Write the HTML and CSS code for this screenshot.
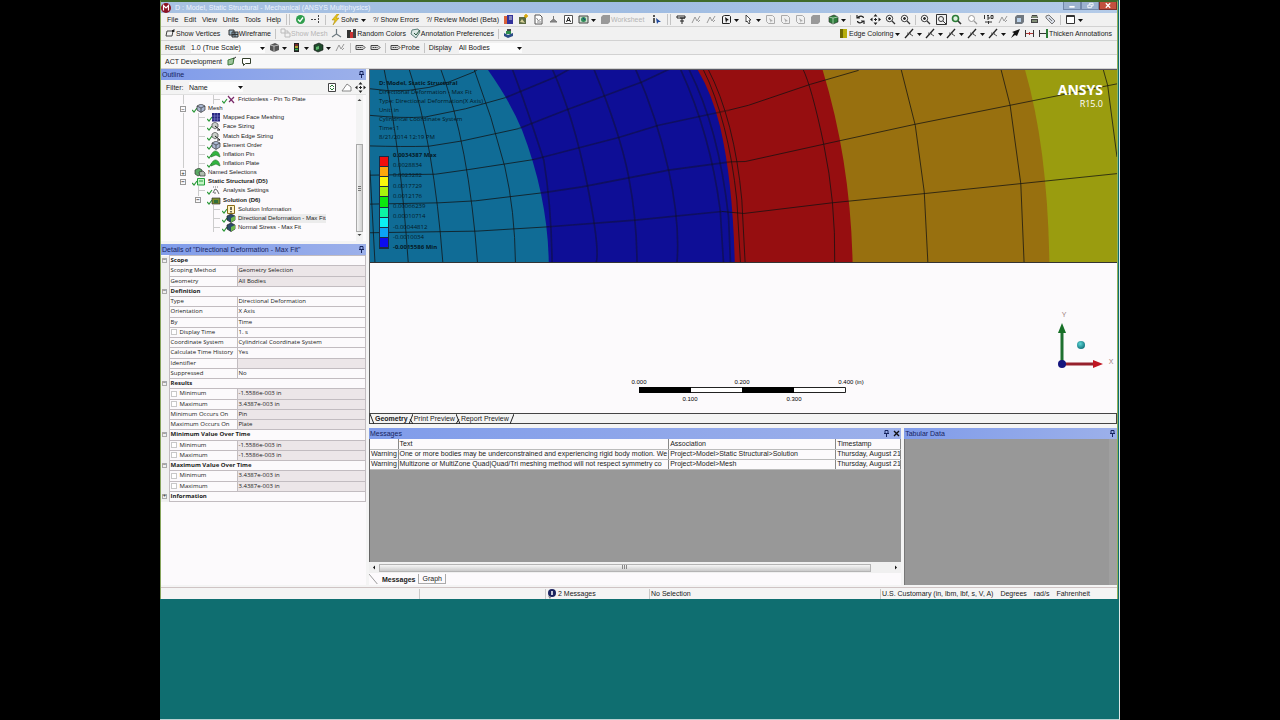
FILE: index.html
```
<!DOCTYPE html>
<html lang="en">
<head>
    <meta charset="UTF-8">
    <meta name="viewport" content="width=device-width, initial-scale=1.0">
    <title>D : Model, Static Structural - Mechanical</title>
    <link rel="stylesheet" href="styles.css">
</head>
<body>
    <!-- Icon shapes used by the toolbars and the tree -->
    <svg class="defs" aria-hidden="true">
        <symbol id="caret" viewBox="0 0 5 10"><path d="M0 4h5L2.500 7z" fill="#111"/></symbol>
        <symbol id="ok" viewBox="0 0 11 11"><circle cx="5.500" cy="5.500" r="4.500" fill="#2f9e4d"/><path d="M3 5.500l2 2 3-4" fill="none" stroke="#fff" stroke-width="1.300"/></symbol>
        <symbol id="dots" viewBox="0 0 11 11"><path d="M1 5.500h5M8.500 1v9" stroke="#444" stroke-dasharray="2 1"/></symbol>
        <symbol id="bolt" viewBox="0 0 11 11"><path d="M7 0L2 6h3l-2 5 6-7H6l3-4z" fill="#e6c318" stroke="#a98700" stroke-width=".5"/></symbol>
        <symbol id="chart" viewBox="0 0 11 11"><path d="M1 2h3v8H1z" fill="#d9623a"/><path d="M4 1h6v9H4z" fill="#32329b"/><path d="M6 3h3M6 5h3" stroke="#ddd"/></symbol>
        <symbol id="image" viewBox="0 0 11 11"><path d="M1 3h7v7H1z" fill="#5c6b42"/><path d="M2 8l2-3 3 4z" fill="#d8d29a"/><path d="M8 0v4M6 2h4" stroke="#d5a400" stroke-width="1.500"/></symbol>
        <symbol id="sheet" viewBox="0 0 11 11"><path d="M2 1h5l2 2v7H2z" fill="#fff" stroke="#555"/><path d="M3.500 4l2 3 2-2M4 8h4" fill="none" stroke="#888"/></symbol>
        <symbol id="refresh" viewBox="0 0 11 11"><path d="M1.500 1.500h7v8h-7z" fill="#fff" stroke="#444"/><path d="M3 5l2-2 2 2M3 6l2 2 2-2" fill="none" stroke="#2a7b35"/></symbol>
        <symbol id="pin3d" viewBox="0 0 11 11"><path d="M5.500 2v4M2 8l3.500-3L9 8z" fill="#888" stroke="#777"/></symbol>
        <symbol id="letter" viewBox="0 0 11 11"><path d="M1.500 1.500h8v8h-8z" fill="#fff" stroke="#555"/><path d="M3.500 8l2-5 2 5M4 6.500h3" fill="none" stroke="#222"/></symbol>
        <symbol id="globe" viewBox="0 0 11 11"><path d="M1 2h9v7H1z" fill="#cfe0d0" stroke="#444"/><circle cx="5.500" cy="5.500" r="2.500" fill="#2e8b57"/><path d="M5 4l2 2" stroke="#123a8a"/></symbol>
        <symbol id="cube" viewBox="0 0 11 11"><path d="M1 3l5-2 4 2v5l-5 2-4-2z" fill="#555"/><path d="M1 3l4 1 5-1M5 4v6" fill="none" stroke="#ddd" stroke-width=".7"/></symbol>
        <symbol id="gcube" viewBox="0 0 11 11"><path d="M1 3l5-2 4 2v5l-5 2-4-2z" fill="#2f7d3c" stroke="#222" stroke-width=".6"/><path d="M1 3l4 1 5-1M5 4v6" fill="none" stroke="#cfe8cf" stroke-width=".7"/></symbol>
        <symbol id="dcube" viewBox="0 0 11 11"><path d="M1 3l5-2 4 2v5l-5 2-4-2z" fill="#1f4a2c" stroke="#111" stroke-width=".6"/><path d="M3 5l3-1v3l-3 1z" fill="#5ab56a"/></symbol>
        <symbol id="bands" viewBox="0 0 11 11"><path d="M3 1h5v9H3z" fill="#222"/><path d="M4 3h3" stroke="#c33"/><path d="M4 5h3" stroke="#dc3" stroke-width="1.500"/><path d="M4 7.500h3" stroke="#3b5" stroke-width="1.500"/></symbol>
        <symbol id="info" viewBox="0 0 11 11"><path d="M3 1v2M3 4v5" stroke="#222" stroke-width="1.500"/><path d="M5 4l5 4H7.500L6 10z" fill="#214a9c"/></symbol>
        <symbol id="funnel" viewBox="0 0 11 11"><path d="M1 2h8v2H1zM4 4h5M6 4v6M4 7h4" fill="#fff" stroke="#222"/></symbol>
        <symbol id="wave" viewBox="0 0 11 11"><path d="M1 9l3-6 2 4 3-5M7 8l2-2" fill="none" stroke="#999"/></symbol>
        <symbol id="selbox" viewBox="0 0 11 11"><path d="M1.500 2.500l2-1h5l1 1v6l-1 1h-7z" fill="none" stroke="#222"/><path d="M4 3l4 3-2 .5L5 9z" fill="#111"/></symbol>
        <symbol id="selgrey" viewBox="0 0 11 11"><path d="M1.500 1.500h6l2 2v6h-6l-2-2z" fill="none" stroke="#aaa"/><path d="M4 4l4 3-2 .5V9z" fill="#aaa"/></symbol>
        <symbol id="arrow" viewBox="0 0 11 11"><path d="M3 1l5 5H6l1 3-1 1-2-3-1 1z" fill="#fff" stroke="#222" stroke-width=".8"/></symbol>
        <symbol id="solid" viewBox="0 0 11 11"><path d="M1 3l2-2h7v7l-2 2H1z" fill="#999"/></symbol>
        <symbol id="rotate" viewBox="0 0 11 11"><path d="M2 1v3h3M2.500 4c2-3 6-2 6 0M9 10V7H6M8.500 7c-2 3-6 2-6 0" fill="none" stroke="#222" stroke-width="1.200"/></symbol>
        <symbol id="move" viewBox="0 0 11 11"><path d="M5.500 0l2 2.500h-4zM5.500 11l2-2.500h-4zM0 5.500l2.500-2v4zM11 5.500l-2.500-2v4z" fill="#222"/><path d="M5.500 4v3M4 5.500h3" stroke="#222"/></symbol>
        <symbol id="zoom" viewBox="0 0 11 11"><circle cx="4.500" cy="4.500" r="3.200" fill="#fff" stroke="#333"/><path d="M3 4.500h3M4.500 3v3M7 7l3 3" stroke="#333" stroke-width="1.300"/></symbol>
        <symbol id="zoombox" viewBox="0 0 11 11"><path d="M.5.500h10v10H.5z" fill="none" stroke="#333"/><circle cx="5" cy="5" r="2.500" fill="none" stroke="#333"/><path d="M7 7l3 3" stroke="#333"/></symbol>
        <symbol id="zoomgreen" viewBox="0 0 11 11"><circle cx="4.500" cy="4.500" r="3" fill="#dff0df" stroke="#2a7b35" stroke-width="1.600"/><path d="M7 7l3 3" stroke="#333" stroke-width="1.600"/></symbol>
        <symbol id="zoomgrey" viewBox="0 0 11 11"><circle cx="4.500" cy="4.500" r="3" fill="#fff" stroke="#999"/><path d="M7 7l3 3" stroke="#999" stroke-width="1.300"/></symbol>
        <symbol id="iso" viewBox="0 0 11 11"><path d="M1.500 1v4M4 1.500h2M4 3h2v2H4M8 1.500h2v3H8zM2 8h7M5.500 7v3" fill="none" stroke="#333"/></symbol>
        <symbol id="bluebox" viewBox="0 0 11 11"><path d="M1 3l2-2h7v7l-2 2H1z" fill="#707880"/><path d="M3 4h4v4H3z" fill="#b9d0e8"/></symbol>
        <symbol id="stack" viewBox="0 0 11 11"><path d="M3 1h5l1 3H2zM2 5h7v4H2z" fill="#444"/><path d="M3 3h5M3 7h5" stroke="#bfd8a8"/></symbol>
        <symbol id="tag" viewBox="0 0 11 11"><path d="M1 2l3-1 6 6-3 3-6-6z" fill="#d8dde6" stroke="#777"/><path d="M4 4l3 3" stroke="#777"/></symbol>
        <symbol id="eraser" viewBox="0 0 11 11"><path d="M1 9l5-7 4 3v4z" fill="#fff" stroke="#888"/></symbol>
        <symbol id="pane" viewBox="0 0 11 11"><path d="M1.500 1.500h8v8h-8zM1 2.500h9" fill="#fff" stroke="#333"/></symbol>
        <symbol id="vertex" viewBox="0 0 11 11"><path d="M2 3h6l-1 5H1zM9 1v3" fill="none" stroke="#444"/><path d="M7 2h2v2H7z" fill="#222"/></symbol>
        <symbol id="wire" viewBox="0 0 11 11"><path d="M1 2h5v5H1zM4 4h6v5H4z" fill="#9db8c8" stroke="#333"/><path d="M7 4v5M4 6.500h6" stroke="#333"/></symbol>
        <symbol id="meshgrey" viewBox="0 0 11 11"><path d="M1 1h4v4H1zM5 5h5v4H5zM5 3h3v2" fill="none" stroke="#bbb"/></symbol>
        <symbol id="axes" viewBox="0 0 11 11"><path d="M5.500 1v5L1 9M5.500 6L10 9" fill="none" stroke="#6d7a80" stroke-width="1.200"/></symbol>
        <symbol id="colors" viewBox="0 0 11 11"><path d="M1 2h4v8H1z" fill="#333"/><path d="M4 4h3v6H4z" fill="#c33"/><path d="M7 1h3v9H7z" fill="#444"/></symbol>
        <symbol id="annot" viewBox="0 0 11 11"><path d="M2 2l6-1 2 3-4 6-5-4z" fill="#dbe7e4" stroke="#5a7d78"/><path d="M4 5l2 2 4-5" fill="none" stroke="#24533a"/></symbol>
        <symbol id="drum" viewBox="0 0 11 11"><path d="M1 5l4 2 5-2v3L5 10 1 8z" fill="#2b4c86"/><path d="M3 3h5v3H3z" fill="#2f8d4b"/><path d="M4 1h4v2H4z" fill="#444"/></symbol>
        <symbol id="edge" viewBox="0 0 11 11"><path d="M2 1h3v9H2z" fill="#6e6a00"/><path d="M5 1h4v9H5z" fill="#b6ad0c"/></symbol>
        <symbol id="slope" viewBox="0 0 11 11"><path d="M1 10l8-9" fill="none" stroke="#222" stroke-width="1.300"/><path d="M6 6l3 2M3 5l4 1" stroke="#555"/></symbol>
        <symbol id="plane" viewBox="0 0 11 11"><path d="M10 1L7 8 5 7l-4 3 3-5-2-1z" fill="#111"/></symbol>
        <symbol id="brackets" viewBox="0 0 11 11"><path d="M1.500 2v7M9.500 2v7" stroke="#333"/><path d="M2 5.500h7M5.500 4v3" stroke="#a33"/></symbol>
        <symbol id="thick" viewBox="0 0 11 11"><path d="M1.500 2v7M2 5.500h6" stroke="#333"/><path d="M9 1v9" stroke="#2a7b35" stroke-width="2"/></symbol>
        <symbol id="label" viewBox="0 0 11 11"><path d="M1 3.500h7l2 2-2 2H1z" fill="#ddd" stroke="#444"/><path d="M2.500 5.500h5" stroke="#444" stroke-dasharray="1.500 .5"/></symbol>
        <symbol id="act" viewBox="0 0 11 11"><path d="M2 4l6-2-1 6-5 1z" fill="#9dc49b" stroke="#3d7a3b"/><path d="M7 3l3-2" stroke="#333"/></symbol>
        <symbol id="bubble" viewBox="0 0 11 11"><path d="M1.500 2.500h8v5h-5l-2 2v-2h-1z" fill="#fff" stroke="#34402c"/></symbol>
        <symbol id="pin" viewBox="0 0 7 7"><path d="M2 .5h3v3H2zM1 3.500h5M3.500 4v3" fill="none" stroke="#16245e"/></symbol>
        <symbol id="close" viewBox="0 0 7 7"><path d="M1 1l5 5M6 1L1 6" stroke="#111" stroke-width="1.400"/></symbol>

        <!-- Tree icons: check mark at the left, object at the right -->
        <symbol id="t-contact" viewBox="0 0 14 9"><path d="M0 6l2 2 3-4" fill="none" stroke="#2d9a3a" stroke-width="1.200"/><path d="M6 1l6 7M7 7l5-5" stroke="#7a2a6a" stroke-width="1.200"/></symbol>
        <symbol id="t-mesh" viewBox="0 0 14 9"><path d="M0 6l2 2 3-4" fill="none" stroke="#2d9a3a" stroke-width="1.200"/><path d="M5 2l4-2 4 2v4L9 8.500 5 6z" fill="#a9b6d0" stroke="#333" stroke-width=".7"/><path d="M5 2l4 2 4-2M9 4v4" fill="none" stroke="#333" stroke-width=".7"/></symbol>
        <symbol id="t-map" viewBox="0 0 14 9"><path d="M0 6l2 2 3-4" fill="none" stroke="#2d9a3a" stroke-width="1.200"/><path d="M5 0h8v8.500H5z" fill="#27277e"/><path d="M7.700 0v9M10.400 0v9M5 3h8M5 6h8" stroke="#8888d0" stroke-width=".6"/></symbol>
        <symbol id="t-size" viewBox="0 0 14 9"><path d="M0 6l2 2 3-4" fill="none" stroke="#2d9a3a" stroke-width="1.200"/><path d="M5 2l3-2 3 2v3L8 7 5 5z" fill="#c9cec9" stroke="#444" stroke-width=".7"/><path d="M8 4l5 4M10 8h3" stroke="#222"/></symbol>
        <symbol id="t-infl" viewBox="0 0 14 9"><path d="M0 6l2 2 3-4" fill="none" stroke="#2d9a3a" stroke-width="1.200"/><path d="M4 7c1-8 8-8 9 0l-4-2z" fill="#31b43f" stroke="#1c6d27" stroke-width=".6"/></symbol>
        <symbol id="t-named" viewBox="0 0 14 9"><path d="M3 2l4-2 3 2v4L6 8 3 6z" fill="#5ba864" stroke="#333" stroke-width=".7"/><path d="M7 4l4-1 2 2v3H8z" fill="#aebdae" stroke="#333" stroke-width=".7"/></symbol>
        <symbol id="t-static" viewBox="0 0 14 9"><path d="M0 6l2 2 3-4" fill="none" stroke="#2d9a3a" stroke-width="1.200"/><path d="M5.500 1.500h7v6.500h-7z" fill="#c5f2c5" stroke="#23a03a"/><path d="M7 4h4" stroke="#23a03a"/></symbol>
        <symbol id="t-settings" viewBox="0 0 14 9"><path d="M0 6l2 2 3-4" fill="none" stroke="#2d9a3a" stroke-width="1.200"/><path d="M6 1h6" stroke="#777" stroke-dasharray="1 1"/><path d="M6 7l2-4 2 1 2 4M8 8V6" fill="none" stroke="#666"/></symbol>
        <symbol id="t-solution" viewBox="0 0 14 9"><path d="M0 6l2 2 3-4" fill="none" stroke="#2d9a3a" stroke-width="1.200"/><path d="M5 2h8v6H5z" fill="#7b8d2c" stroke="#333" stroke-width=".7"/><path d="M7 4h4v3H7z" fill="#2f6f3c"/></symbol>
        <symbol id="t-info" viewBox="0 0 14 9"><path d="M0 6l2 2 3-4" fill="none" stroke="#2d9a3a" stroke-width="1.200"/><path d="M5.500.5h7v8h-7z" fill="#fff3c4" stroke="#8a6d1a"/><path d="M9 2v3M9 6v1.500" stroke="#222" stroke-width="1.300"/></symbol>
        <symbol id="t-result" viewBox="0 0 14 9"><path d="M0 6l2 2 3-4" fill="none" stroke="#2d9a3a" stroke-width="1.200"/><path d="M5 2l4-2 4 2v4L9 8.500 5 6z" fill="#2a4a6a" stroke="#222" stroke-width=".7"/><path d="M9 4l4-2v4L9 8.500z" fill="#6fb84c"/></symbol>
    </svg>

    <div class="desktop">
        <div class="window">
            <header class="title-bar">
                <svg class="app-icon" viewBox="0 0 10 10"><circle cx="5" cy="5" r="5" fill="#8c1222"/><path d="M2.500 7.500v-5L5 5l2.500-2.500v5" fill="none" stroke="#fff" stroke-width="1.200"/></svg>
                <span class="title">D : Model, Static Structural - Mechanical (ANSYS Multiphysics)</span>
                <div class="window-buttons">
                    <button aria-label="Minimize"><svg viewBox="0 0 18 8"><path d="M6 5.500h6" stroke="#fff" stroke-width="2"/></svg></button>
                    <button aria-label="Restore"><svg viewBox="0 0 18 8"><path d="M6.500 3.500h4v3h-4zM8.500 3V1.500h4v3H11" fill="none" stroke="#fff"/></svg></button>
                    <button class="close" aria-label="Close"><svg viewBox="0 0 18 8"><path d="M6.500 1.500l5 5M11.500 1.500l-5 5" stroke="#fff" stroke-width="1.500"/></svg></button>
                </div>
            </header>

            <div class="toolbar main-bar">
                <nav class="menu">
                    <button>File</button><button>Edit</button><button>View</button><button>Units</button><button>Tools</button><button>Help</button>
                </nav>
                <span class="grip"></span>
                <div class="tools">
                    <button aria-label="Status"><svg><use href="#ok"/></svg></button>
                    <button aria-label="Connect"><svg><use href="#dots"/></svg></button>
                </div>
                <span class="sep"></span>
                <div class="spread solve">
                    <button><svg><use href="#bolt"/></svg>Solve<svg class="caret"><use href="#caret"/></svg></button>
                    <button>?/ Show Errors</button>
                    <button>?/ Review Model (Beta)</button>
                </div>
                <div class="tools insert">
                    <button aria-label="Chart"><svg><use href="#chart"/></svg></button>
                    <button aria-label="Image"><svg><use href="#image"/></svg></button>
                    <button aria-label="Comment"><svg><use href="#sheet"/></svg></button>
                    <button aria-label="Probe"><svg><use href="#pin3d"/></svg></button>
                    <button aria-label="Annotation"><svg><use href="#letter"/></svg></button>
                    <button aria-label="Section"><svg><use href="#globe"/></svg><svg class="caret"><use href="#caret"/></svg></button>
                </div>
                <div class="spread worksheet">
                    <button disabled><svg><use href="#solid"/></svg>Worksheet</button>
                    <button aria-label="Selection information"><svg><use href="#info"/></svg></button>
                </div>
                <span class="grip"></span>
                <div class="tools select">
                    <button aria-label="Filter"><svg><use href="#funnel"/></svg></button>
                    <button aria-label="Label"><svg><use href="#wave"/></svg></button>
                    <button aria-label="Direction"><svg><use href="#wave"/></svg></button>
                    <button aria-label="Select mode"><svg><use href="#selbox"/></svg><svg class="caret"><use href="#caret"/></svg></button>
                    <button aria-label="Pointer"><svg><use href="#arrow"/></svg><svg class="caret"><use href="#caret"/></svg></button>
                    <button aria-label="Vertex"><svg><use href="#selgrey"/></svg></button>
                    <button aria-label="Edge"><svg><use href="#selgrey"/></svg></button>
                    <button aria-label="Face"><svg><use href="#selgrey"/></svg></button>
                    <button aria-label="Body"><svg><use href="#solid"/></svg></button>
                </div>
                <div class="tools extend">
                    <button aria-label="Extend selection"><svg><use href="#gcube"/></svg><svg class="caret"><use href="#caret"/></svg></button>
                </div>
                <span class="sep"></span>
                <div class="tools">
                    <button aria-label="Rotate"><svg><use href="#rotate"/></svg></button>
                    <button aria-label="Pan"><svg><use href="#move"/></svg></button>
                    <button aria-label="Zoom"><svg><use href="#zoom"/></svg></button>
                    <button aria-label="Box zoom"><svg><use href="#zoom"/></svg></button>
                </div>
                <span class="sep"></span>
                <div class="tools view">
                    <button aria-label="Fit"><svg><use href="#zoom"/></svg></button>
                    <button aria-label="Zoom to box"><svg><use href="#zoombox"/></svg></button>
                    <button aria-label="Zoom to selection"><svg><use href="#zoomgreen"/></svg></button>
                    <button aria-label="Magnifier"><svg><use href="#zoomgrey"/></svg></button>
                    <button aria-label="Isometric"><svg><use href="#iso"/></svg></button>
                    <button aria-label="Previous view"><svg><use href="#wave"/></svg></button>
                    <button aria-label="Look at"><svg><use href="#bluebox"/></svg></button>
                    <button aria-label="Manage views"><svg><use href="#stack"/></svg></button>
                    <button aria-label="Tags"><svg><use href="#tag"/></svg></button>
                </div>
                <span class="sep"></span>
                <div class="tools">
                    <button aria-label="Viewports"><svg><use href="#pane"/></svg><svg class="caret"><use href="#caret"/></svg></button>
                </div>
            </div>

            <div class="toolbar">
                <div class="spread show">
                    <button><svg><use href="#vertex"/></svg>Show Vertices</button>
                    <button><svg><use href="#wire"/></svg>Wireframe</button>
                </div>
                <span class="sep"></span>
                <div class="spread graphics">
                    <button disabled><svg><use href="#meshgrey"/></svg>Show Mesh</button>
                    <button aria-label="Axes"><svg><use href="#axes"/></svg></button>
                    <button><svg><use href="#colors"/></svg>Random Colors</button>
                    <button><svg><use href="#annot"/></svg>Annotation Preferences</button>
                </div>
                <span class="sep"></span>
                <button aria-label="Assembly"><svg><use href="#drum"/></svg></button>
                <div class="spread edges">
                    <button><svg><use href="#edge"/></svg>Edge Coloring<svg class="caret"><use href="#caret"/></svg></button>
                    <button aria-label="Free edges"><svg><use href="#slope"/></svg><svg class="caret"><use href="#caret"/></svg></button>
                    <button aria-label="Single edges"><svg><use href="#slope"/></svg><svg class="caret"><use href="#caret"/></svg></button>
                    <button aria-label="Double edges"><svg><use href="#slope"/></svg><svg class="caret"><use href="#caret"/></svg></button>
                    <button aria-label="Triple edges"><svg><use href="#slope"/></svg><svg class="caret"><use href="#caret"/></svg></button>
                    <button aria-label="Multiple edges"><svg><use href="#slope"/></svg><svg class="caret"><use href="#caret"/></svg></button>
                    <button aria-label="Edge direction"><svg><use href="#plane"/></svg></button>
                    <button aria-label="Mesh connection"><svg><use href="#brackets"/></svg></button>
                    <button><svg><use href="#thick"/></svg>Thicken Annotations</button>
                </div>
            </div>

            <div class="toolbar">
                <label class="result-label" for="scale">Result</label>
                <span class="drop scale"><select id="scale"><option>1.0 (True Scale)</option></select><svg class="caret"><use href="#caret"/></svg></span>
                <div class="tools">
                    <button aria-label="Geometry"><svg><use href="#cube"/></svg><svg class="caret"><use href="#caret"/></svg></button>
                    <button aria-label="Contours"><svg><use href="#bands"/></svg><svg class="caret"><use href="#caret"/></svg></button>
                    <button aria-label="Edges"><svg><use href="#dcube"/></svg><svg class="caret"><use href="#caret"/></svg></button>
                    <button aria-label="Vectors"><svg><use href="#wave"/></svg></button>
                </div>
                <span class="sep"></span>
                <div class="tools">
                    <button aria-label="Maximum"><svg><use href="#label"/></svg></button>
                    <button aria-label="Minimum"><svg><use href="#label"/></svg></button>
                </div>
                <span class="sep"></span>
                <button><svg><use href="#label"/></svg>Probe</button>
                <span class="sep"></span>
                <label class="display-label" for="display">Display</label>
                <span class="drop bodies"><select id="display"><option>All Bodies</option></select><svg class="caret"><use href="#caret"/></svg></span>
            </div>

            <div class="toolbar act-bar">
                <button>ACT Development</button>
                <div class="tools">
                    <button aria-label="Reload"><svg><use href="#act"/></svg></button>
                    <button aria-label="Comments"><svg><use href="#bubble"/></svg></button>
                </div>
            </div>

            <main class="workspace">
                <div class="side">
                    <section class="panel outline">
                        <h2 class="panel-title">Outline<button aria-label="Pin"><svg><use href="#pin"/></svg></button></h2>
                        <div class="filter">
                            <label for="filter">Filter:</label>
                            <span class="drop filter-by"><select id="filter"><option>Name</option></select><svg class="caret"><use href="#caret"/></svg></span>
                            <button aria-label="Refresh"><svg><use href="#refresh"/></svg></button>
                            <button aria-label="Clear"><svg><use href="#eraser"/></svg></button>
                            <button aria-label="Expand"><svg><use href="#move"/></svg></button>
                        </div>
                        <div class="tree-box">
                            <ul class="tree">
                                <li><i class="guide line"></i><i class="guide"></i><i class="branch"></i><svg><use href="#t-contact"/></svg>Frictionless - Pin To Plate</li>
                                <li><button class="toggle" aria-label="Collapse">−</button><svg><use href="#t-mesh"/></svg>Mesh</li>
                                <li><i class="guide line"></i><i class="branch"></i><svg><use href="#t-map"/></svg>Mapped Face Meshing</li>
                                <li><i class="guide line"></i><i class="branch"></i><svg><use href="#t-size"/></svg>Face Sizing</li>
                                <li><i class="guide line"></i><i class="branch"></i><svg><use href="#t-size"/></svg>Match Edge Sizing</li>
                                <li><i class="guide line"></i><i class="branch"></i><svg><use href="#t-mesh"/></svg>Element Order</li>
                                <li><i class="guide line"></i><i class="branch"></i><svg><use href="#t-infl"/></svg>Inflation Pin</li>
                                <li><i class="guide line"></i><i class="branch"></i><svg><use href="#t-infl"/></svg>Inflation Plate</li>
                                <li><button class="toggle" aria-label="Expand">+</button><svg><use href="#t-named"/></svg>Named Selections</li>
                                <li class="strong"><button class="toggle" aria-label="Collapse">−</button><svg><use href="#t-static"/></svg>Static Structural (D5)</li>
                                <li><i class="guide"></i><i class="branch"></i><svg><use href="#t-settings"/></svg>Analysis Settings</li>
                                <li class="strong"><i class="guide"></i><button class="toggle" aria-label="Collapse">−</button><svg><use href="#t-solution"/></svg>Solution (D6)</li>
                                <li><i class="guide"></i><i class="guide"></i><i class="branch"></i><svg><use href="#t-info"/></svg>Solution Information</li>
                                <li><i class="guide"></i><i class="guide"></i><i class="branch"></i><svg><use href="#t-result"/></svg><span class="selected">Directional Deformation - Max Fit</span></li>
                                <li><i class="guide"></i><i class="guide"></i><i class="branch"></i><svg><use href="#t-result"/></svg>Normal Stress - Max Fit</li>
                            </ul>
                            <div class="scroll-v">
                                <svg viewBox="0 0 7 6"><path d="M1.500 4l2-2 2 2z" fill="#444"/></svg>
                                <span class="thumb"><svg viewBox="0 0 5 7"><path d="M1 1.500h3M1 3.500h3M1 5.500h3" stroke="#777"/></svg></span>
                                <svg viewBox="0 0 7 6"><path d="M1.500 2l2 2 2-2z" fill="#444"/></svg>
                            </div>
                        </div>
                    </section>

                    <section class="panel details">
                        <h2 class="panel-title">Details of "Directional Deformation - Max Fit"<button aria-label="Pin"><svg><use href="#pin"/></svg></button></h2>
                        <table class="props">
                            <colgroup><col class="fold-col"><col class="name-col"><col></colgroup>
                            <tr><td><button class="fold">−</button></td><th colspan="2">Scope</th></tr>
                            <tr><td></td><td>Scoping Method</td><td class="fixed">Geometry Selection</td></tr>
                            <tr><td></td><td>Geometry</td><td class="fixed">All Bodies</td></tr>
                            <tr><td><button class="fold">−</button></td><th colspan="2">Definition</th></tr>
                            <tr><td></td><td>Type</td><td>Directional Deformation</td></tr>
                            <tr><td></td><td>Orientation</td><td>X Axis</td></tr>
                            <tr><td></td><td>By</td><td>Time</td></tr>
                            <tr><td></td><td><label><input type="checkbox">Display Time</label></td><td>1. s</td></tr>
                            <tr><td></td><td>Coordinate System</td><td>Cylindrical Coordinate System</td></tr>
                            <tr><td></td><td>Calculate Time History</td><td>Yes</td></tr>
                            <tr><td></td><td>Identifier</td><td class="fixed"></td></tr>
                            <tr><td></td><td>Suppressed</td><td>No</td></tr>
                            <tr><td><button class="fold">−</button></td><th colspan="2">Results</th></tr>
                            <tr><td></td><td><label><input type="checkbox">Minimum</label></td><td class="fixed">-1.5586e-003 in</td></tr>
                            <tr><td></td><td><label><input type="checkbox">Maximum</label></td><td class="fixed">3.4387e-003 in</td></tr>
                            <tr><td></td><td>Minimum Occurs On</td><td class="fixed">Pin</td></tr>
                            <tr><td></td><td>Maximum Occurs On</td><td class="fixed">Plate</td></tr>
                            <tr><td><button class="fold">−</button></td><th colspan="2">Minimum Value Over Time</th></tr>
                            <tr><td></td><td><label><input type="checkbox">Minimum</label></td><td class="fixed">-1.5586e-003 in</td></tr>
                            <tr><td></td><td><label><input type="checkbox">Maximum</label></td><td class="fixed">-1.5586e-003 in</td></tr>
                            <tr><td><button class="fold">−</button></td><th colspan="2">Maximum Value Over Time</th></tr>
                            <tr><td></td><td><label><input type="checkbox">Minimum</label></td><td class="fixed">3.4387e-003 in</td></tr>
                            <tr><td></td><td><label><input type="checkbox">Maximum</label></td><td class="fixed">3.4387e-003 in</td></tr>
                            <tr><td><button class="fold">+</button></td><th colspan="2">Information</th></tr>
                        </table>
                    </section>
                </div>

                <div class="content">
                    <section class="viewport">
                        <svg class="model" viewBox="3 9 2244 576">
                            <path d="M0 0H2250V600H0z" fill="#9a9c0f"/>
                            <path d="M0 0H1968L1971 10Q2040 250 2044 600H0z" fill="#98700f"/>
                            <path d="M0 0H1360L1363 10Q1448 290 1453 600H0z" fill="#960e10"/>
                            <path d="M0 0H984L988 10Q1030 80 1055 180Q1094 350 1099 600H0z" fill="#0e0e96"/>
                            <path d="M0 0H352L358 10Q425 105 460 190Q540 400 540 600H0z" fill="#106c96"/>
                            <g class="mesh">
                                <path d="M0 65Q120 85 240 45L315 15L330 5"/>
                                <path d="M0 145Q100 155 170 150Q290 130 410 92"/>
                                <path d="M0 237Q100 240 180 238L280 222L450 185"/>
                                <path d="M0 325L200 322L300 308L495 278"/>
                                <path d="M0 412L210 408L320 402L520 378"/>
                                <path d="M0 498L325 493L540 480"/>
                                <path d="M3 310L18 590M45 5Q95 250 118 590M120 5Q195 230 222 590M215 5Q300 230 326 590M315 5Q370 150 408 300Q438 430 440 590"/>
                            </g>
                            <g class="mesh soft">
                                <path d="M410 92L560 30L605 5M450 185L590 130L820 45L905 5M495 278L750 212L870 175L1080 130M520 378L640 360L900 310L1085 285M540 480L800 460L1060 434"/>
                                <path d="M430 5Q470 110 525 280Q548 420 550 590M550 5Q615 150 655 350T682 590M675 5Q755 200 780 330T805 590M800 5Q865 150 900 310T925 590"/>
                                <path d="M935 5Q1025 200 1055 430L1065 590M960 5Q1050 180 1080 450L1086 590"/>
                            </g>
                            <g class="mesh">
                                <path d="M1080 130L1140 115L1326 52L1471 10M1085 285L1130 284L1366 232L1641 172L1926 115L2250 50M1060 434L1126 440L1391 408L1671 380L1961 350L2250 320"/>
                                <path d="M1003 5Q1080 160 1105 400L1116 590M1018 5Q1098 160 1120 400L1130 590M1303 5Q1330 60 1366 232T1399 590M1598 5L1641 175L1668 375L1679 590M1898 5L1926 115L1958 350L1968 590M2205 5L2219 55L2247 270"/>
                            </g>
                        </svg>

                        <div class="annotation">
                            <p class="strong">D: Model, Static Structural</p>
                            <p>Directional Deformation - Max Fit</p>
                            <p>Type: Directional Deformation(X Axis)</p>
                            <p>Unit: in</p>
                            <p>Cylindrical Coordinate System</p>
                            <p>Time: 1</p>
                            <p>8/21/2014 12:19 PM</p>
                        </div>

                        <div class="legend">
                            <div class="legend-bar">
                                <i class="c1"></i><i class="c2"></i><i class="c3"></i><i class="c4"></i><i class="c5"></i><i class="c6"></i><i class="c7"></i><i class="c8"></i><i class="c9"></i>
                            </div>
                            <ol class="legend-values">
                                <li class="strong">0.0034387 Max</li>
                                <li>0.0028834</li>
                                <li>0.0023282</li>
                                <li>0.0017729</li>
                                <li>0.0012176</li>
                                <li>0.00066239</li>
                                <li>0.00010714</li>
                                <li>-0.00044812</li>
                                <li>-0.0010034</li>
                                <li class="strong">-0.0015586 Min</li>
                            </ol>
                        </div>

                        <div class="brand">
                            <strong>ANSYS</strong>
                            <span>R15.0</span>
                        </div>

                        <svg class="ruler" viewBox="0 0 260 30">
                            <path d="M27.500 11.500h206v5h-206z" fill="#fff" stroke="#222"/>
                            <path d="M27 11h52v6H27zM130 11h52v6h-52z"/>
                            <text x="27" y="8">0.000</text>
                            <text x="130" y="8">0.200</text>
                            <text x="239" y="8">0.400 (in)</text>
                            <text x="78" y="25">0.100</text>
                            <text x="182" y="25">0.300</text>
                        </svg>

                        <svg class="triad" viewBox="0 0 60 64">
                            <defs>
                                <radialGradient id="ball" cx=".4" cy=".35" r=".7"><stop offset="0" stop-color="#5fd6d6"/><stop offset="1" stop-color="#0d6f78"/></radialGradient>
                            </defs>
                            <path d="M7 54V22" stroke="#1f7030" stroke-width="3"/>
                            <path d="M7 13l4 10H3z" fill="#177027"/>
                            <path d="M8 54h32" stroke="#96202c" stroke-width="3"/>
                            <path d="M48 54l-10 4v-8z" fill="#c01522"/>
                            <circle cx="7" cy="54" r="4" fill="#15157e"/>
                            <circle cx="26" cy="35" r="4" fill="url(#ball)"/>
                            <text x="9" y="7">Y</text>
                            <text x="56" y="54">X</text>
                        </svg>
                    </section>

                    <div class="view-tabs">
                        <svg viewBox="0 0 4 10"><path d="M0 0l4 10" stroke="#222"/></svg>
                        <button class="strong">Geometry</button>
                        <svg viewBox="0 0 4 10"><path d="M4 0L0 10M1 5l3 5" stroke="#222"/></svg>
                        <button>Print Preview</button>
                        <svg viewBox="0 0 4 10"><path d="M0 0l4 10M3 5L0 10" stroke="#222"/></svg>
                        <button>Report Preview</button>
                        <svg viewBox="0 0 4 10"><path d="M4 0L0 10" stroke="#222"/></svg>
                    </div>

                    <div class="dock">
                        <section class="panel messages">
                            <h2 class="panel-title">Messages<button aria-label="Pin"><svg><use href="#pin"/></svg></button><button aria-label="Close"><svg><use href="#close"/></svg></button></h2>
                            <div class="message-list">
                                <table class="message-table">
                                    <thead>
                                        <tr><th class="kind"></th><th>Text</th><th class="association">Association</th><th class="stamp">Timestamp</th></tr>
                                    </thead>
                                    <tbody>
                                        <tr><td>Warning</td><td>One or more bodies may be underconstrained and experiencing rigid body motion. We</td><td>Project&gt;Model&gt;Static Structural&gt;Solution</td><td>Thursday, August 21</td></tr>
                                        <tr><td>Warning</td><td>Multizone or MultiZone Quad|Quad/Tri meshing method will not respect symmetry co</td><td>Project&gt;Model&gt;Mesh</td><td>Thursday, August 21</td></tr>
                                    </tbody>
                                </table>
                            </div>
                            <div class="scroll-h">
                                <svg viewBox="0 0 6 7"><path d="M4 1.500l-2 2 2 2z" fill="#111"/></svg>
                                <span class="thumb"><svg viewBox="0 0 6 7"><path d="M.5 1v4M2.500 1v4M4.500 1v4" stroke="#888"/></svg></span>
                                <svg viewBox="0 0 6 7"><path d="M2 1.500l2 2-2 2z" fill="#111"/></svg>
                            </div>
                            <div class="dock-tabs">
                                <svg viewBox="0 0 12 12"><path d="M0 0l10 12" stroke="#888"/></svg>
                                <button class="strong">Messages</button>
                                <button class="graph">Graph</button>
                            </div>
                        </section>

                        <section class="panel tabular">
                            <h2 class="panel-title">Tabular Data<button aria-label="Pin"><svg><use href="#pin"/></svg></button></h2>
                            <div class="tabular-body"></div>
                        </section>
                    </div>
                </div>
            </main>

            <footer class="status">
                <span class="cell hint"></span>
                <span class="cell hint-end"></span>
                <span class="cell count"><svg viewBox="0 0 10 10"><circle cx="5" cy="4" r="4" fill="#1b2460"/><path d="M5 2v4" stroke="#fff" stroke-width="1.500"/><path d="M1 7l2 3 1-2z" fill="#888"/></svg>2 Messages</span>
                <span class="cell selection">No Selection</span>
                <span class="cell units"><span>U.S. Customary (in, lbm, lbf, s, V, A)</span><span>Degrees</span><span>rad/s</span><span>Fahrenheit</span></span>
            </footer>
        </div>
    </div>
</body>
</html>
```
FILE: styles.css
```
* {
    margin: 0;
    padding: 0;
    box-sizing: border-box;
}

body {
    min-height: 100vh;
    display: flex;
    justify-content: center;
    background: #000;
    color: #1a1a1a;
    font-family: "Liberation Sans", Arial, sans-serif;
    font-size: 7px;
    line-height: 9px;
}

button, select {
    font: inherit;
    color: inherit;
    background: none;
    border: none;
    appearance: none;
    white-space: nowrap;
}

button {
    display: flex;
    align-items: center;
    cursor: pointer;
}

svg {
    display: block;
    flex: none;
}

.defs {
    position: absolute;
    width: 0;
    height: 0;
}

.strong {
    font-weight: bold;
}

.desktop {
    width: 75%;
    background: #0f6e70;
    border-right: 1px solid #dfe8e8;
    border-bottom: 1px solid #b9d0d0;
}

.window {
    height: 599px;
    margin-right: 1px;
    display: flex;
    flex-direction: column;
    background: #f4f4f4;
    border-left: 1px solid #86a45c;
    border-right: 1px solid #8fb05a;
    border-top: 2px solid #3f6a2a;
}

/* Title bar */
.title-bar {
    height: 11px;
    display: flex;
    align-items: center;
    gap: 4px;
    background: linear-gradient(90deg, #a8c2e2, #9fbce2 50%, #b4cbe8);
}

.app-icon {
    width: 10px;
    height: 10px;
}

.title {
    color: #eef4fc;
}

.window-buttons {
    display: flex;
    align-self: flex-start;
    margin-left: auto;
}

.window-buttons button {
    width: 18px;
    height: 8px;
    background: #9cb2cf;
    border: 1px solid #7187a8;
    border-top: none;
}

.window-buttons .close {
    background: #c2503e;
    border-color: #7d2e2c;
}

.window-buttons svg {
    width: 16px;
    height: 7px;
}

/* Toolbars */
.toolbar {
    height: 14px;
    display: flex;
    align-items: center;
    padding-left: 4px;
    background: #f1f1f1;
    border-bottom: 1px solid #d2d2d2;
}

.toolbar svg, .filter svg {
    width: 11px;
    height: 11px;
}

.toolbar .caret, .filter .caret {
    width: 5px;
    height: 10px;
    margin-left: 2px;
}

.toolbar button:disabled {
    color: #b5b5b5;
}

.main-bar {
    padding-left: 6px;
}

.menu, .spread {
    display: flex;
    justify-content: space-between;
}

.menu {
    width: 114px;
}

.tools {
    display: flex;
    gap: 4px;
}

.sep {
    width: 1px;
    height: 10px;
    margin: 0 4px;
    background: #c4c4c4;
}

.grip {
    width: 4px;
    height: 11px;
    margin: 0 5px;
    border-left: 1px solid #c4c4c4;
    border-right: 1px solid #c4c4c4;
}

.solve {
    width: 169px;
}

.insert {
    margin-left: 4px;
}

.worksheet {
    width: 62px;
    margin-left: 4px;
}

.select {
    width: 146px;
}

.extend {
    margin-left: 6px;
}

.view {
    width: 136px;
    justify-content: space-between;
}

.show {
    width: 106px;
}

.graphics {
    width: 214px;
}

.edges {
    width: 274px;
    margin-left: auto;
    margin-right: 5px;
}

.drop {
    display: flex;
    align-items: center;
    background: #fcfcfc;
}

.drop select {
    flex: 1;
    width: 100%;
    outline: none;
}

.result-label {
    width: 26px;
}

.scale {
    width: 74px;
    margin-right: 4px;
}

.display-label {
    width: 30px;
}

.bodies {
    width: 63px;
}

.act-bar {
    background: #f8f8f8;
    gap: 4px;
}

/* Workspace */
.workspace {
    flex: 1;
    min-height: 0;
    display: flex;
    gap: 3px;
    padding-bottom: 2px;
}

.side {
    width: 205px;
    display: flex;
    flex-direction: column;
    gap: 3px;
}

.panel {
    display: flex;
    flex-direction: column;
    background: #fcfafc;
}

.panel-title {
    height: 11px;
    display: flex;
    align-items: center;
    gap: 3px;
    padding: 0 1px;
    background: linear-gradient(90deg, #809cea, #9cb0ea);
    color: #16245e;
    font-size: 7px;
    font-weight: normal;
}

.panel-title svg {
    width: 7px;
    height: 7px;
}

.panel-title button:first-of-type {
    margin-left: auto;
}

.outline {
    height: 172px;
}

.filter {
    height: 15px;
    display: flex;
    align-items: center;
    gap: 3px;
    padding-left: 5px;
    background: #f3f3f3;
    border-bottom: 1px solid #e0e0e0;
}

.filter label {
    width: 20px;
}

.filter-by {
    width: 54px;
    margin-right: auto;
}

.tree-box {
    flex: 1;
    min-height: 0;
    display: flex;
    font-size: 6px;
    padding-right: 3px;
}

.tree {
    flex: 1;
    display: flex;
    flex-direction: column;
    padding: 0 0 9px 19px;
    list-style: none;
    white-space: nowrap;
}

.tree li {
    flex: 1;
    display: flex;
    align-items: center;
}

.tree svg {
    width: 14px;
    height: 9px;
    margin-right: 2px;
}

.guide, .branch, .toggle {
    flex: none;
    align-self: stretch;
}

.guide {
    width: 15px;
}

.line {
    background: linear-gradient(#ccc, #ccc) 3px 0 / 1px 100% no-repeat;
}

.branch {
    width: 12px;
    background:
        linear-gradient(#ccc, #ccc) 3px 0 / 1px 100% no-repeat,
        linear-gradient(#ccc, #ccc) 3px 50% / 7px 1px no-repeat;
}

.toggle {
    width: 6px;
    height: 6px;
    margin-right: 6px;
    align-self: center;
    justify-content: center;
    border: 1px solid #999;
    line-height: 4px;
}

.selected {
    background: #ececec;
}

.scroll-v {
    width: 7px;
    display: flex;
    flex-direction: column;
    align-items: center;
    padding: 2px 0 3px;
    background: #f3f3f3;
}

.scroll-v svg {
    width: 7px;
    height: 6px;
}

.scroll-v .thumb {
    flex: 1;
    width: 7px;
    margin-top: 41px;
    display: flex;
    align-items: center;
    justify-content: center;
    background: linear-gradient(90deg, #f4f4f4, #cfcfcf);
    border: 1px solid #a9a9a9;
}

.thumb svg {
    width: 5px;
    height: 7px;
}

.details {
    flex: 1;
}

.props {
    width: 100%;
    height: 247px;
    border-collapse: collapse;
    table-layout: fixed;
    font-family: "Open Sans", sans-serif;
    font-size: 6px;
}

.fold-col {
    width: 8px;
}

.name-col {
    width: 68px;
}

.props td, .props th {
    border: 1px solid #c2bcc0;
    padding: 0 1px;
    line-height: 9px;
    text-align: left;
    white-space: nowrap;
    overflow: hidden;
}

.props td:first-child {
    border: none;
    background: #f0f0f0;
}

.props .fixed {
    background: #ece6e8;
}

.props label {
    display: flex;
    align-items: center;
    gap: 3px;
}

.props input {
    appearance: none;
    width: 6px;
    height: 6px;
    border: 1px solid #c8c8c8;
    background: #fff;
}

.fold {
    width: 5px;
    height: 5px;
    justify-content: center;
    border: 1px solid #aaa;
    line-height: 3px;
}

/* Model view */
.content {
    flex: 1;
    min-width: 0;
    display: flex;
    flex-direction: column;
}

.viewport {
    position: relative;
    flex: 1;
    min-height: 0;
    overflow: hidden;
    background: #fcfafc;
    border-left: 1px solid #666;
}

.model {
    width: 100%;
    border-top: 1px solid #5a5a66;
    border-bottom: 1px solid #333;
}

.mesh {
    fill: none;
    stroke: #111;
    stroke-opacity: .75;
    stroke-width: 3;
}

.soft {
    stroke-opacity: .4;
    stroke-width: 5;
}

.annotation {
    position: absolute;
    top: 10px;
    left: 9px;
    font-family: "Open Sans", sans-serif;
    font-size: 6px;
    color: #041a26;
}

.legend {
    position: absolute;
    top: 82px;
    left: 9px;
    display: flex;
    gap: 4px;
    color: #041a26;
    font-family: "Open Sans", sans-serif;
    font-size: 6px;
}

.legend-bar {
    width: 10px;
    height: 93px;
    margin-top: 5px;
    display: flex;
    flex-direction: column;
    border: 1px solid #1a2a44;
}

.legend-bar i {
    flex: 1;
    border-bottom: 1px solid #1a2a44;
}

.c1 { background: #f20d0d; }
.c2 { background: #fca80c; }
.c3 { background: #f8f80c; }
.c4 { background: #a8f40c; }
.c5 { background: #0ce80c; }
.c6 { background: #0cf4a4; }
.c7 { background: #0cf0f4; }
.c8 { background: #0ca4f8; }
.c9 { background: #0c0cf0; }

.legend-values {
    height: 101px;
    display: flex;
    flex-direction: column;
    justify-content: space-between;
    list-style: none;
}

.brand {
    position: absolute;
    top: 12px;
    right: 14px;
    display: flex;
    flex-direction: column;
    align-items: flex-end;
    color: #fff;
    font-family: "Open Sans", sans-serif;
    font-size: 9px;
    line-height: 10px;
}

.brand strong {
    font-size: 14px;
    line-height: 18px;
}

.ruler {
    position: absolute;
    bottom: 7px;
    left: calc(50% - 132px);
    width: 260px;
    height: 30px;
    font-size: 6px;
    text-anchor: middle;
}

.triad {
    position: absolute;
    right: 2px;
    bottom: 39px;
    width: 60px;
    height: 64px;
    font-size: 7px;
    text-anchor: middle;
}

.triad text {
    fill: #a08080;
}

.view-tabs {
    height: 11px;
    display: flex;
    align-items: center;
    gap: 1px;
    background: #f4f4f4;
    border: 1px solid #444;
}

.view-tabs svg {
    width: 4px;
    height: 10px;
}

/* Messages and tabular data */
.dock {
    height: 157px;
    display: flex;
    gap: 3px;
    margin-top: 4px;
}

.messages {
    flex: 5;
    min-width: 0;
}

.tabular {
    flex: 2;
    background: #989898;
}

.message-list {
    flex: 1;
    min-height: 0;
    background: #989898;
    border-left: 1px solid #666;
    overflow: hidden;
}

.message-table {
    width: 100%;
    table-layout: fixed;
    border-collapse: collapse;
    background: #fcfafc;
}

.message-table th, .message-table td {
    height: 10px;
    padding: 0 1px;
    border-right: 1px solid #888;
    border-bottom: 1px solid #bbb;
    line-height: 8px;
    font-weight: normal;
    text-align: left;
    white-space: nowrap;
    overflow: hidden;
}

.message-table .kind {
    width: 28px;
}

.message-table .association {
    width: 167px;
}

.message-table .stamp {
    width: 65px;
}

.scroll-h {
    height: 11px;
    display: flex;
    align-items: center;
    padding: 0 2px;
    background: #f0f0f0;
}

.scroll-h svg {
    width: 6px;
    height: 7px;
}

.scroll-h .thumb {
    flex: 1;
    height: 8px;
    margin: 0 22px 0 2px;
    display: flex;
    align-items: center;
    justify-content: center;
    border: 1px solid #b4b4b4;
    background: linear-gradient(#f6f6f6, #cacaca);
}

.dock-tabs {
    height: 12px;
    display: flex;
    align-items: center;
    gap: 3px;
}

.dock-tabs svg {
    width: 10px;
    height: 12px;
}

.dock-tabs .graph {
    padding: 0 3px;
    border: 1px solid #aaa;
    border-top: none;
}

.tabular-body {
    flex: 1;
    border-left: 1px solid #777;
    border-right: 8px solid #a0a0a0;
}

/* Status bar */
.status {
    height: 12px;
    display: flex;
    align-items: center;
    border-top: 1px solid #cfc4c4;
}

.cell {
    height: 10px;
    display: flex;
    align-items: center;
    padding-left: 1px;
    border-left: 1px solid #c8c8c8;
    white-space: nowrap;
}

.cell svg {
    width: 10px;
    height: 10px;
    margin-right: 1px;
}

.hint {
    width: 258px;
    border-left: none;
}

.hint-end {
    width: 126px;
}

.count {
    width: 104px;
}

.selection {
    flex: 1;
}

.units {
    width: 237px;
    gap: 7px;
}
```
